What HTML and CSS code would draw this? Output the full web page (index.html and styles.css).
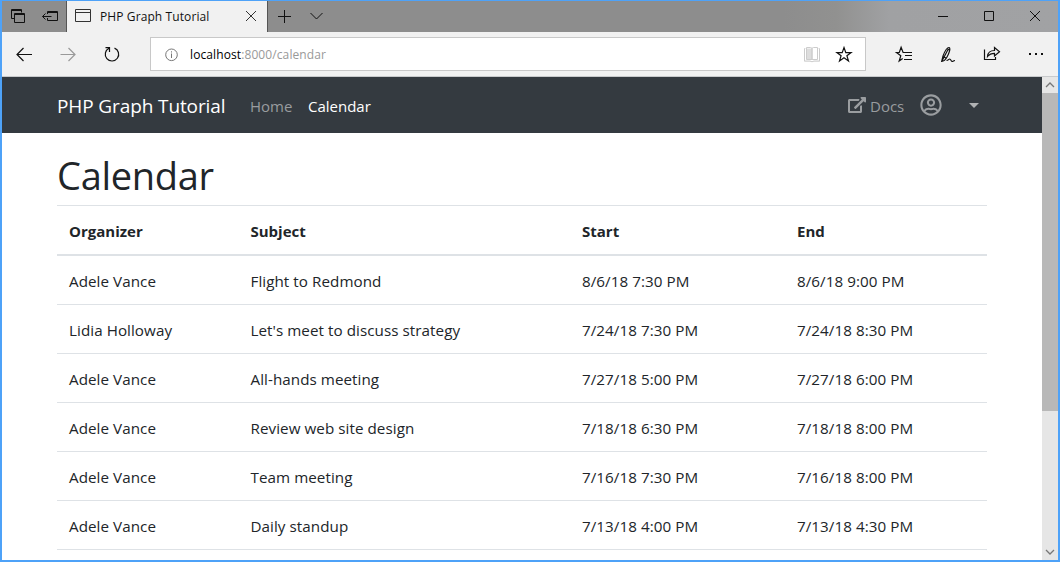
FILE: index.html
```html
<!DOCTYPE html>
<html lang="en">
<head>
<meta charset="utf-8">
<title>PHP Graph Tutorial</title>
<link rel="stylesheet" href="styles.css">
</head>
<body>
<div class="window">
  <div class="titlebar">
    <svg class="ico" width="32" height="31" viewBox="2 1 32 31"><path d="M14 18.500h-2.500v-9h10v3M11.500 10.500h10M14.500 13.500h10v9h-10zM14.500 14.500h10"/></svg>
    <svg class="ico" width="32" height="31" viewBox="34 1 32 31"><path d="M47.500 14v-2.500h10v9h-10V18M47.500 12.500h10M42.500 16.500h9M45.500 13.500l-3 3 3 3"/></svg>
    <div class="tab">
      <svg class="ico tab-ico" width="33" height="31" viewBox="67 1 33 31"><path d="M75.500 9.500h15v12h-15zM75.500 12.500h15"/></svg>
      <span class="tab-title">PHP Graph Tutorial</span>
      <svg class="ico tab-close" width="32" height="31" viewBox="235 1 32 31"><path d="M246 11l10 10M256 11l-10 10"/></svg>
    </div>
    <svg class="ico" width="34" height="31" viewBox="268 1 34 31"><path d="M278 16.500h13M284.500 10v13"/></svg>
    <svg class="ico" width="32" height="31" viewBox="302 1 32 31"><path d="M310.500 13l6 6 6-6"/></svg>
    <div class="spacer"></div>
    <svg class="ico" width="46" height="31" viewBox="920 1 46 31"><path d="M938 16.500h10"/></svg>
    <svg class="ico" width="46" height="31" viewBox="966 1 46 31"><path d="M984.500 11.500h9v9h-9z"/></svg>
    <svg class="ico" width="46" height="31" viewBox="1012 1 46 31"><path d="M1030 11l10 10M1040 11l-10 10"/></svg>
  </div>

  <div class="toolbar">
    <svg class="ico nav-ico" width="44" height="44" viewBox="2 32 44 44"><path d="M17.500 54.500h14.500M23.500 48l-6.500 6.500 6.500 6.500"/></svg>
    <svg class="ico nav-ico off" width="44" height="44" viewBox="46 32 44 44"><path d="M60.500 54.500h14.500M68.500 48l6.500 6.500-6.500 6.500"/></svg>
    <svg class="ico nav-ico" width="60" height="44" viewBox="90 32 60 44"><path d="M114.500 48.100A6.700 6.700 0 1 1 109 48.300M105.500 47.700h4v4.300"/></svg>
    <div class="address">
      <svg class="ico info" width="39" height="32" viewBox="151 38 39 32"><circle cx="171.500" cy="54.800" r="5.800"/><path d="M171.500 53.500v4.500M171.500 51.300v1.200"/></svg>
      <span class="url">localhost<span class="url-rest">:8000/calendar</span></span>
      <svg class="ico" width="70" height="32" viewBox="795 38 70 32"><path class="book-fill" d="M804 48h16v13.500h-16z"/><path class="book" d="M806.500 47.500h4c1 0 1.500.5 1.500 1.500v10.500h-5.500zM817.500 47.500h-4c-1 0-1.500.5-1.500 1.500v10.500h5.500zM804.500 48.500v12.500h5.500l2 .8 2-.8h5.500v-12.500"/><path class="star" d="M844 47.500l1.800 5.100h5.300l-4.200 3.200 1.600 5.100-4.500-3.100-4.500 3.100 1.600-5.100-4.200-3.200h5.300z"/></svg>
    </div>
    <svg class="ico bold" width="44" height="44" viewBox="882 32 44 44"><path d="M906 52.500h-2.900l-2-5.200-1.800 5.200h-2.800l4.300 3.300-1.600 5.200 3.500-2.600M903 52.500h9M905 55.500h7M904 59.500h8"/></svg>
    <svg class="ico bold" width="44" height="44" viewBox="926 32 44 44"><path d="M941.700 61.300l1.300-5.300c1.500-4 4-8.500 6-8.500 2 .5 0 6-2 9.500-1.200 2.300-3.500 4.300-5.300 4.300zM943.300 56.500l2.500 1.500M947.500 49l2.200 1.200M942 61l6-11.500M946.500 60.500c2 0 2-1.500 3.200-1.500s1.300 2.500 2.600 2.500c1 0 1.200-1 2.700-1"/></svg>
    <svg class="ico bold" width="44" height="44" viewBox="970 32 44 44"><path d="M984.500 49.500v10h11v-2.500M987.500 56.500c.3-3.800 3-6 7-6v-3l5 4.300-5 4.200v-2.700c-3 0-5 .7-7 3.200z"/></svg>
    <svg class="ico" width="44" height="44" viewBox="1014 32 44 44"><path class="solid" d="M1029 53h2v2h-2zM1035 53h2v2h-2zM1041 53h2v2h-2z"/></svg>
  </div>

  <div class="viewport">
    <div class="page">
      <nav class="navbar">
        <span class="brand">PHP Graph Tutorial</span>
        <span class="nav-link home">Home</span>
        <span class="nav-link active">Calendar</span>
        <div class="spacer"></div>
        <svg class="docs-ico" width="18" height="16" viewBox="0 0 576 512"><path d="M576 24v127.984c0 21.461-25.960 31.980-40.971 16.971l-35.707-35.709-243.523 243.523c-9.373 9.373-24.568 9.373-33.941 0l-22.627-22.627c-9.373-9.373-9.373-24.569 0-33.941L442.756 76.676l-35.703-35.705C391.982 25.900 402.656 0 424.024 0H552c13.255 0 24 10.745 24 24zM407.029 270.794l-16 16A23.999 23.999 0 0 0 384 303.765V448H64V128h264a24.003 24.003 0 0 0 16.970-7.029l16-16C376.089 89.851 365.381 64 344 64H48C21.490 64 0 85.490 0 112v352c0 26.510 21.490 48 48 48h352c26.510 0 48-21.490 48-48V287.764c0-21.382-25.852-32.090-40.971-16.970z"/></svg>
        <span class="nav-link docs">Docs</span>
        <svg class="user-ico" width="22" height="22" viewBox="0 0 496 512"><path d="M248 104c-53 0-96 43-96 96s43 96 96 96 96-43 96-96-43-96-96-96zm0 144c-26.500 0-48-21.500-48-48s21.500-48 48-48 48 21.500 48 48-21.500 48-48 48zm0-240C111 8 0 119 0 256s111 248 248 248 248-111 248-248S385 8 248 8zm0 448c-49.700 0-95.100-18.300-130.100-48.400 14.900-23 40.400-38.600 69.600-39.500 20.800 6.400 40.600 9.600 60.500 9.600s39.700-3.100 60.500-9.600c29.200 1 54.700 16.500 69.600 39.500-35 30.100-80.400 48.400-130.100 48.400zm162.700-84.100c-24.400-31.400-62.100-51.900-105.100-51.900-10.200 0-26 9.600-57.600 9.600-31.500 0-47.400-9.600-57.600-9.600-42.900 0-80.600 20.500-105.100 51.900C61.900 339.200 48 299.200 48 256c0-110.300 89.700-200 200-200s200 89.700 200 200c0 43.200-13.900 83.200-37.300 115.900z"/></svg>
        <span class="caret"></span>
      </nav>
      <main class="content">
        <h1>Calendar</h1>
        <table>
          <colgroup><col class="c-org"><col class="c-subj"><col class="c-start"><col></colgroup>
          <thead><tr><th>Organizer</th><th>Subject</th><th>Start</th><th>End</th></tr></thead>
          <tbody>
            <tr><td>Adele Vance</td><td>Flight to Redmond</td><td>8/6/18 7:30 PM</td><td>8/6/18 9:00 PM</td></tr>
            <tr><td>Lidia Holloway</td><td>Let's meet to discuss strategy</td><td>7/24/18 7:30 PM</td><td>7/24/18 8:30 PM</td></tr>
            <tr><td>Adele Vance</td><td>All-hands meeting</td><td>7/27/18 5:00 PM</td><td>7/27/18 6:00 PM</td></tr>
            <tr><td>Adele Vance</td><td>Review web site design</td><td>7/18/18 6:30 PM</td><td>7/18/18 8:00 PM</td></tr>
            <tr><td>Adele Vance</td><td>Team meeting</td><td>7/16/18 7:30 PM</td><td>7/16/18 8:00 PM</td></tr>
            <tr class="last"><td>Adele Vance</td><td>Daily standup</td><td>7/13/18 4:00 PM</td><td>7/13/18 4:30 PM</td></tr>
          </tbody>
        </table>
      </main>
    </div>
    <div class="scrollbar">
      <svg class="ico arrow" width="16" height="16" viewBox="0 0 16 16"><path d="M4 10l4-4 4 4"/></svg>
      <div class="thumb"></div>
      <div class="spacer"></div>
      <svg class="ico arrow" width="16" height="16" viewBox="0 0 16 16"><path d="M4 6l4 4 4-4"/></svg>
    </div>
  </div>
</div>
</body>
</html>
```
FILE: styles.css
```css
* { box-sizing: border-box; }
body {
  margin: 0;
  font-family: "Open Sans", "Noto Sans", sans-serif;
  font-size: 15px;
  color: #212529;
}
.window {
  width: 1060px;
  height: 562px;
  display: flex;
  flex-direction: column;
  border: 2px solid #4ea2f8;
  border-top-width: 1px;
  background: #fff;
  overflow: hidden;
}
svg { display: block; flex: none; }
.ico { fill: none; stroke: #111; stroke-width: 1; }
.spacer { flex: 1; }

.titlebar {
  height: 31px;
  flex: none;
  display: flex;
  background: linear-gradient(90deg, #8d8d8d 0 74%, #919190 79%, #a0a1a3 84%, #a1a2a4 100%);
}
.tab {
  width: 202px;
  display: flex;
  align-items: center;
  background: #f1f1f1;
  border-left: 1px solid #555;
  border-right: 1px solid #555;
}
.tab-title { flex: 1; font-size: 12px; letter-spacing: 0.1px; color: #111; white-space: nowrap; }
.tab-close, .tab-ico { stroke: #333; }

.toolbar {
  height: 45px;
  flex: none;
  display: flex;
  background: #f1f1f1;
  border-bottom: 1px solid #c8cacc;
}
.nav-ico { stroke-width: 1.2; }
.off { stroke: #999; }
.bold { stroke-width: 1.2; }
.address {
  width: 716px;
  height: 34px;
  margin: 5px 16px 0 0;
  display: flex;
  align-items: center;
  background: #fff;
  border: 1px solid #c8c8c8;
}
.info { stroke: #777; }
.url { flex: 1; font-size: 12px; color: #000; letter-spacing: 0.1px; }
.url-rest { color: #999; }
.book-fill { fill: #ddd; stroke: none; }
.book { fill: #fff; stroke: #ccc; }
.star { stroke-width: 1.2; }
.solid { fill: #111; stroke: none; }

.viewport { flex: 1; min-height: 0; display: flex; }
.page { width: 1040px; overflow: hidden; }
.navbar {
  height: 56px;
  display: flex;
  align-items: center;
  padding: 0 63px 0 55px;
  background: #343a40;
}
.brand { width: 193px; padding-top: 1px; color: #fff; font-size: 19px; letter-spacing: -0.11px; white-space: nowrap; }
.nav-link { padding-top: 2px; color: #999c9f; font-size: 15px; }
.home { width: 58px; }
.active { color: #fff; }
.docs { width: 50px; }
.docs-ico { margin-right: 4px; fill: #9a9da0; }
.user-ico { margin-right: 27px; fill: #9a9da0; }
.docs-ico, .user-ico { stroke: none; }
.caret { border: 5px solid transparent; border-top-color: #b0b2b4; border-bottom: 0; }

.content { padding: 16px 55px 0; }
h1 { height: 48px; margin: 0 0 8px; font-size: 38px; font-weight: 400; line-height: 53px; letter-spacing: -0.3px; }
table { width: 930px; table-layout: fixed; border-collapse: separate; border-spacing: 0; }
.c-org { width: 181.500px; }
.c-subj { width: 331.500px; }
.c-start { width: 215px; }
th, td {
  height: 49px;
  padding: 1px 12px 0;
  text-align: left;
  border-top: 1px solid #dee2e6;
  white-space: nowrap;
}
td { font-size: 15.2px; letter-spacing: 0.06px; }
thead th { height: 51px; border-bottom: 2px solid #dee2e6; }
tbody tr:first-child td { border-top: 0; height: 48px; }
.last td { height: 50px; border-bottom: 1px solid #dee2e6; }

.scrollbar { width: 16px; display: flex; flex-direction: column; background: #e6e6e6; }
.thumb { height: 318px; background: #b8b8b8; }
.arrow { stroke: #777; stroke-width: 1.3; }
```
